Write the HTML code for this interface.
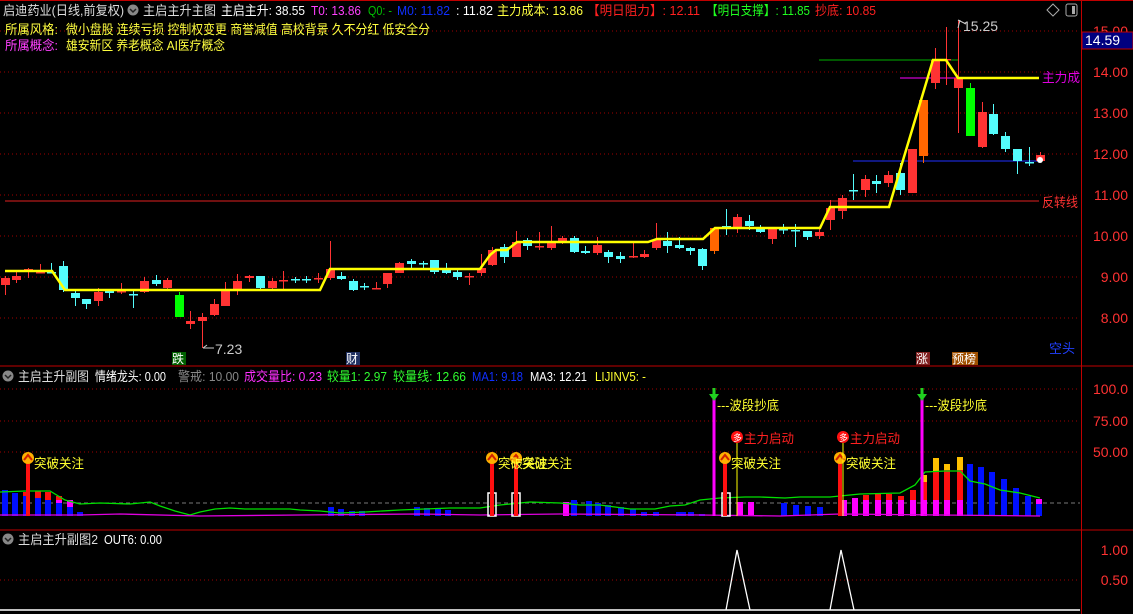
<!DOCTYPE html>
<html><head><meta charset="utf-8">
<style>
html,body{margin:0;padding:0;background:#000;width:1133px;height:614px;overflow:hidden}
svg{display:block}
text{font-family:"Liberation Sans","Noto Sans CJK SC",sans-serif;font-size:13px}
</style></head><body>
<svg id="s" width="1133" height="614" xmlns="http://www.w3.org/2000/svg">
<rect width="1133" height="614" fill="#000"/>
<line x1="0" y1="0.5" x2="1133" y2="0.5" stroke="#c00000"/>
<g id="grid" stroke="#a00000" stroke-dasharray="1,3">
<line x1="0" y1="31" x2="1080" y2="31"/><line x1="0" y1="72" x2="1080" y2="72"/>
<line x1="0" y1="113" x2="1080" y2="113"/><line x1="0" y1="154" x2="1080" y2="154"/>
<line x1="0" y1="195" x2="1080" y2="195"/><line x1="0" y1="236" x2="1080" y2="236"/>
<line x1="0" y1="277" x2="1080" y2="277"/><line x1="0" y1="318" x2="1080" y2="318"/>
<line x1="0" y1="389" x2="1080" y2="389"/><line x1="0" y1="421" x2="1080" y2="421"/>
<line x1="0" y1="452" x2="1080" y2="452"/><line x1="0" y1="580" x2="1080" y2="580"/>
</g>
<line x1="0" y1="366" x2="1133" y2="366" stroke="#c00000"/>
<line x1="0" y1="530" x2="1133" y2="530" stroke="#c00000"/>
<line x1="1081.5" y1="0" x2="1081.5" y2="614" stroke="#c00000"/>
<g fill="#ff3232" text-anchor="end">
<text x="1128" y="36" style="font-size:14px">15.00</text><text x="1128" y="77" style="font-size:14px">14.00</text>
<text x="1128" y="118" style="font-size:14px">13.00</text><text x="1128" y="159" style="font-size:14px">12.00</text>
<text x="1128" y="200" style="font-size:14px">11.00</text><text x="1128" y="241" style="font-size:14px">10.00</text>
<text x="1128" y="282" style="font-size:14px">9.00</text><text x="1128" y="323" style="font-size:14px">8.00</text>
<text x="1128" y="394" style="font-size:14px">100.0</text><text x="1128" y="426" style="font-size:14px">75.00</text>
<text x="1128" y="457" style="font-size:14px">50.00</text>
<text x="1128" y="555" style="font-size:14px">1.00</text><text x="1128" y="585" style="font-size:14px">0.50</text>
</g>
<rect x="1082" y="32" width="51" height="17" fill="#000080" stroke="#c00000"/>
<text x="1085" y="45" fill="#fff" style="font-size:14px">14.59</text>
<line x1="5" y1="201" x2="1039" y2="201" stroke="#e02020"/>
<line x1="819" y1="60" x2="958" y2="60" stroke="#00b000"/>
<line x1="900" y1="78" x2="958" y2="78" stroke="#ff00ff"/>
<line x1="853" y1="161" x2="1040" y2="161" stroke="#2030ff"/>
<g id="candles"></g>
<polyline fill="none" stroke="#ffff00" stroke-width="2.5" points="5,271 52,271 65,290 320,290 330,269 480,269 490,255 496,250 507,250 517,242 648,242 657,239 703,239 715,228 820,228 830,207 889,207 933,60 946,60 958,78 1039,78"/>
<text x="1042" y="82" fill="#e000e0" textLength="38" lengthAdjust="spacingAndGlyphs">主力成</text>
<text x="1042" y="207" fill="#ff3232" textLength="36" lengthAdjust="spacingAndGlyphs">反转线</text>
<text x="963" y="31" fill="#ccc" style="font-size:14px">15.25</text>
<path d="M960 20 L958 28 M958 20 L966 24" stroke="#ccc" fill="none"/>
<text x="215" y="354" fill="#ccc" style="font-size:14px">7.23</text>
<path d="M203 348 L214 348 M203 348 L207 345" stroke="#ccc" fill="none"/>
<rect x="172" y="352" width="14" height="13" fill="#006000"/><text x="172" y="363" fill="#fff" style="font-size:12px">跌</text>
<rect x="346" y="352" width="14" height="13" fill="#203060"/><text x="346" y="363" fill="#fff" style="font-size:12px">财</text>
<rect x="916" y="352" width="14" height="13" fill="#802020"/><text x="916" y="363" fill="#fff" style="font-size:12px">涨</text>
<rect x="952" y="352" width="26" height="13" fill="#a05000"/><text x="952" y="363" fill="#fff" style="font-size:12px">预榜</text>
<text x="1049" y="353" fill="#2040ff">空头</text>
<!-- header -->
<g lengthAdjust="spacingAndGlyphs">
<text x="3" y="15" fill="#ddd" textLength="121" lengthAdjust="spacingAndGlyphs">启迪药业(日线,前复权)</text>
<circle cx="133" cy="10" r="5.5" fill="#888"/><path d="M130 9 L133 12 L136 9" stroke="#222" fill="none" stroke-width="1.5"/>
<text x="143" y="15" fill="#ddd" textLength="73" lengthAdjust="spacingAndGlyphs">主启主升主图</text>
<text x="221" y="15" fill="#fff" textLength="84" lengthAdjust="spacingAndGlyphs">主启主升: 38.55</text>
<text x="311" y="15" fill="#ff40ff" textLength="50" lengthAdjust="spacingAndGlyphs">T0: 13.86</text>
<text x="368" y="15" fill="#00c000" textLength="24" lengthAdjust="spacingAndGlyphs">Q0: -</text>
<text x="397" y="15" fill="#1030ff" textLength="53" lengthAdjust="spacingAndGlyphs">M0: 11.82</text>
<text x="456" y="15" fill="#fff" textLength="37" lengthAdjust="spacingAndGlyphs">: 11.82</text>
<text x="497" y="15" fill="#ffff40" textLength="86" lengthAdjust="spacingAndGlyphs">主力成本: 13.86</text>
<text x="587" y="15" fill="#ff2020" textLength="113" lengthAdjust="spacingAndGlyphs">【明日阻力】: 12.11</text>
<text x="706" y="15" fill="#20ff20" textLength="104" lengthAdjust="spacingAndGlyphs">【明日支撑】: 11.85</text>
<text x="815" y="15" fill="#ff2020" textLength="61" lengthAdjust="spacingAndGlyphs">抄底: 10.85</text>
</g>
<path d="M1053 4 L1059 10 L1053 16 L1047 10 Z" stroke="#aaa" fill="none"/>
<rect x="1066" y="4" width="11" height="12" rx="2" stroke="#aaa" fill="none"/><rect x="1072" y="6" width="3" height="8" fill="#aaa"/>
<text x="5" y="34" fill="#ffff40" textLength="53" lengthAdjust="spacingAndGlyphs">所属风格:</text>
<text x="66" y="34" fill="#ffff40" textLength="364" lengthAdjust="spacingAndGlyphs">微小盘股 连续亏损 控制权变更 商誉减值 高校背景 久不分红 低安全分</text>
<text x="5" y="50" fill="#ff40ff" textLength="53" lengthAdjust="spacingAndGlyphs">所属概念:</text>
<text x="66" y="50" fill="#ffff40" textLength="159" lengthAdjust="spacingAndGlyphs">雄安新区 养老概念 AI医疗概念</text>
<!-- sub1 header -->
<circle cx="8" cy="376" r="5.5" fill="#888"/><path d="M5 375 L8 378 L11 375" stroke="#222" fill="none" stroke-width="1.5"/>
<text x="18" y="381" fill="#ddd" textLength="71" lengthAdjust="spacingAndGlyphs">主启主升副图</text>
<text x="95" y="381" fill="#fff" textLength="71" lengthAdjust="spacingAndGlyphs">情绪龙头: 0.00</text>
<text x="178" y="381" fill="#888" textLength="61" lengthAdjust="spacingAndGlyphs">警戒: 10.00</text>
<text x="244" y="381" fill="#ff30ff" textLength="78" lengthAdjust="spacingAndGlyphs">成交量比: 0.23</text>
<text x="327" y="381" fill="#30ff30" textLength="60" lengthAdjust="spacingAndGlyphs">较量1: 2.97</text>
<text x="393" y="381" fill="#30ff30" textLength="73" lengthAdjust="spacingAndGlyphs">较量线: 12.66</text>
<text x="472" y="381" fill="#1030ff" textLength="51" lengthAdjust="spacingAndGlyphs">MA1: 9.18</text>
<text x="530" y="381" fill="#fff" textLength="57" lengthAdjust="spacingAndGlyphs">MA3: 12.21</text>
<text x="595" y="381" fill="#ffff30" textLength="51" lengthAdjust="spacingAndGlyphs">LIJINV5: -</text>
<line x1="0" y1="503" x2="1080" y2="503" stroke="#777" stroke-dasharray="4,3"/>
<g id="bars"></g>
<polyline fill="none" stroke="#00e000" stroke-width="1.3" points="0,492 25,491 50,491 65,500 80,504 100,503 130,504 150,502 160,506 175,511 190,515 200,512 215,509 230,508 245,509 290,509 300,510 320,511 340,513 365,512 400,510 450,508 480,508 500,505 530,502 560,503 580,505 600,505 615,507 630,509 655,509 670,506 685,505 700,500 720,498 745,497 760,497 785,498 800,497 830,497 840,496 860,494 900,493 915,485 925,472 945,471 960,471 970,481 985,484 1000,490 1020,493 1040,498"/>
<polyline fill="none" stroke="#e000e0" stroke-width="1.3" points="0,515 80,515 120,514 200,516 300,515 420,514 480,515 560,514 700,515 780,516 840,514 1040,516"/>
<g id="marks"></g>
<!-- sub2 -->
<circle cx="8" cy="539" r="5.5" fill="#888"/><path d="M5 538 L8 541 L11 538" stroke="#222" fill="none" stroke-width="1.5"/>
<text x="18" y="544" fill="#ddd" textLength="80" lengthAdjust="spacingAndGlyphs">主启主升副图2</text>
<text x="104" y="544" fill="#fff" textLength="58" lengthAdjust="spacingAndGlyphs">OUT6: 0.00</text>
<line x1="0" y1="610" x2="1080" y2="610" stroke="#fff" stroke-width="1.5"/>
<polyline fill="none" stroke="#fff" stroke-width="1.3" points="726,610 737,550 750,610"/>
<polyline fill="none" stroke="#fff" stroke-width="1.3" points="830,610 841,550 854,610"/>
</svg>
<script>
var NS="http://www.w3.org/2000/svg";
function el(p,t,a){var e=document.createElementNS(NS,t);for(var k in a)e.setAttribute(k,a[k]);p.appendChild(e);return e;}
var C={r:"#ff3333",c:"#54fcfc",g:"#00ff00",o:"#ff6600"};
var d=[[5,278,285,276,295,'r'],[16,276,280,270,283,'r'],[28,269,272,268,278,'r'],[40,272,273,264,273,'r'],[51,272,273,263,273,'c'],
[63,266,290,261,292,'c'],[75,293,298,290,306,'c'],[86,299,304,299,309,'c'],[98,292,301,288,306,'r'],[109,291,293,289,298,'c'],
[121,291,292,283,294,'r'],[133,294,295,291,308,'c'],[144,281,292,277,293,'r'],[156,280,284,275,286,'c'],[167,280,288,278,289,'r'],
[179,295,317,292,317,'g'],[190,321,324,311,329,'r'],[202,317,321,313,348,'r'],[214,304,315,299,316,'r'],[225,289,306,282,306,'r'],
[237,281,289,274,295,'r'],[249,276,278,275,282,'r'],[260,276,288,276,290,'c'],[272,281,288,278,290,'r'],[283,280,281,271,289,'r'],
[295,279,280,277,283,'c'],[306,279,280,276,283,'c'],[318,278,279,273,283,'r'],[330,269,278,241,280,'r'],[341,276,279,272,280,'c'],
[353,281,290,279,291,'c'],[364,286,287,283,290,'c'],[376,288,289,282,289,'r'],[387,273,284,273,288,'r'],[399,263,273,262,273,'r'],
[411,261,264,259,268,'c'],[423,263,264,261,268,'c'],[434,260,272,260,274,'c'],[446,269,273,263,274,'c'],[457,272,277,269,280,'c'],
[469,276,277,273,285,'r'],[481,268,273,254,276,'r'],[492,250,265,247,266,'r'],[504,247,257,244,263,'c'],[516,242,257,231,257,'r'],
[527,240,246,238,250,'c'],[539,246,247,232,250,'r'],[551,242,248,226,250,'r'],[562,238,242,236,244,'r'],[574,238,252,236,253,'c'],
[585,251,253,246,254,'c'],[597,245,253,237,255,'r'],[608,252,257,250,263,'c'],[620,256,259,252,263,'c'],[633,256,257,242,258,'r'],
[644,254,257,250,258,'r'],[656,240,248,223,250,'r'],[667,241,246,232,253,'c'],[679,245,248,237,249,'c'],[690,248,251,247,255,'c'],
[702,249,266,248,270,'c'],[714,228,251,228,254,'o'],[726,226,227,209,235,'c'],[737,217,229,214,233,'r'],[749,221,226,215,230,'c'],
[760,227,232,225,233,'c'],[772,229,239,228,244,'r'],[783,229,230,224,234,'c'],[795,230,231,224,247,'c'],[807,231,237,231,240,'c'],
[819,232,236,229,239,'r'],[830,208,220,200,230,'r'],[842,198,211,195,219,'r'],[853,190,191,174,200,'c'],[865,179,190,175,197,'r'],
[876,181,184,175,193,'c'],[888,175,183,171,187,'r'],[900,173,190,163,195,'c'],[912,149,193,149,193,'r'],[923,100,156,100,163,'o'],
[935,60,83,48,89,'r'],[946,59,60,27,85,'r'],[958,78,88,20,133,'r'],[970,88,136,83,136,'g'],[982,112,147,102,148,'r'],
[993,114,134,104,135,'c'],[1005,136,149,132,152,'c'],[1017,149,161,149,174,'c'],[1029,162,163,147,166,'c'],[1040,155,161,152,162,'r']];
var g=document.getElementById('candles');
d.forEach(function(c){var col=C[c[5]];var x=c[0];
el(g,'line',{x1:x+0.5,y1:c[3],x2:x+0.5,y2:c[4],stroke:col,'stroke-width':1});
var h=Math.max(1.5,c[2]-c[1]);el(g,'rect',{x:x-4,y:c[1],width:9,height:h,fill:col});});
el(g,'circle',{cx:1040,cy:160,r:3,fill:'#fff'});
var b=document.getElementById('bars');
function bar(x,y,col,w){el(b,'rect',{x:x,y:y,width:w||6,height:516-y,fill:col});}
[[2,490],[12,493],[23,496],[35,498],[45,500],[56,503],[67,507],[77,512],[328,507],[338,509],[349,511],[359,511],[414,507],[424,508],[435,509],[445,510],
[571,500],[586,501],[595,503],[605,505],[618,507],[630,509],[641,512],[653,512],[676,512],[688,512],[699,514],[680,512],[781,503],[793,505],[805,506],[817,507],
[967,464],[978,467],[989,472],[1001,479],[1013,488],[1025,496],[1036,504]].forEach(function(a){bar(a[0],a[1],'#0010ff');});
[[23,492,496],[35,491,498],[45,492,500],[56,496,500]].forEach(function(a){el(b,'rect',{x:a[0],y:a[1],width:6,height:a[2]-a[1],fill:'#ff1010'});});
el(b,'rect',{x:56,y:500,width:6,height:3,fill:'#ff00ff'});el(b,'rect',{x:67,y:500,width:6,height:7,fill:'#ff00ff'});
[[563,502],[737,502],[748,502],[841,500],[852,498],[863,500],[875,500],[886,500],[898,500],[910,500],[921,500],[933,500],[944,500],[957,500],[1036,499]].forEach(function(a){
 if(a[0]==1036){el(b,'rect',{x:a[0],y:499,width:6,height:5,fill:'#ff00ff'});return;} bar(a[0],a[1],'#ff00ff');});
[[863,495],[875,494],[886,494],[898,496],[910,490],[921,482],[933,471],[944,470],[957,470]].forEach(function(a){el(b,'rect',{x:a[0],y:a[1],width:6,height:500-a[1],fill:'#ff1010'});});
[[921,475,482],[933,458,471],[944,464,470],[957,457,470]].forEach(function(a){el(b,'rect',{x:a[0],y:a[1],width:6,height:a[2]-a[1],fill:'#ffc000'});});
var m=document.getElementById('marks');
function tp(x){el(m,'rect',{x:x-2,y:462,width:4,height:54,fill:'#ff1010'});el(m,'circle',{cx:x,cy:458,r:6,fill:'#ffb000'});
 el(m,'path',{d:'M'+(x-4)+' 460 L'+x+' 455 L'+(x+4)+' 460',stroke:'#d02000',fill:'none','stroke-width':2});}
[492,516,726].forEach(function(x){el(m,'rect',{x:x-4,y:493,width:8,height:23,fill:'none',stroke:'#fff','stroke-width':1.5});});
[28,492,516,725,840].forEach(tp);
function tx(x,y,s,c,w){var t=el(m,'text',{x:x,y:y,fill:c});if(w){t.setAttribute('textLength',w);t.setAttribute('lengthAdjust','spacingAndGlyphs');}t.textContent=s;}
tx(34,468,'突破关注','#ffff30',50);tx(498,468,'突破关注','#ffff30',50);tx(522,468,'突破关注','#ffff30',50);tx(731,468,'突破关注','#ffff30',50);tx(846,468,'突破关注','#ffff30',50);
[737,843].forEach(function(x){el(m,'line',{x1:x,y1:443,x2:x,y2:516,stroke:'#ffff00'});el(m,'circle',{cx:x,cy:437,r:6,fill:'#ff1010'});tx(x+7,443,'主力启动','#ff2020',50);
 var t=el(m,'text',{x:x-4,y:441,fill:'#fff'});t.setAttribute('style','font-size:9px');t.textContent='多';});
[714,922].forEach(function(x){el(m,'rect',{x:x-1.5,y:388,width:3,height:128,fill:'#ff00ff'});
 el(m,'path',{d:'M'+(x-5)+' 394 L'+(x+5)+' 394 L'+x+' 401 Z',fill:'#20d020'});el(m,'rect',{x:x-1.5,y:388,width:3,height:7,fill:'#20d020'});
 tx(x+3,410,'---波段抄底','#ffff30',62);});
</script>
</body></html>
